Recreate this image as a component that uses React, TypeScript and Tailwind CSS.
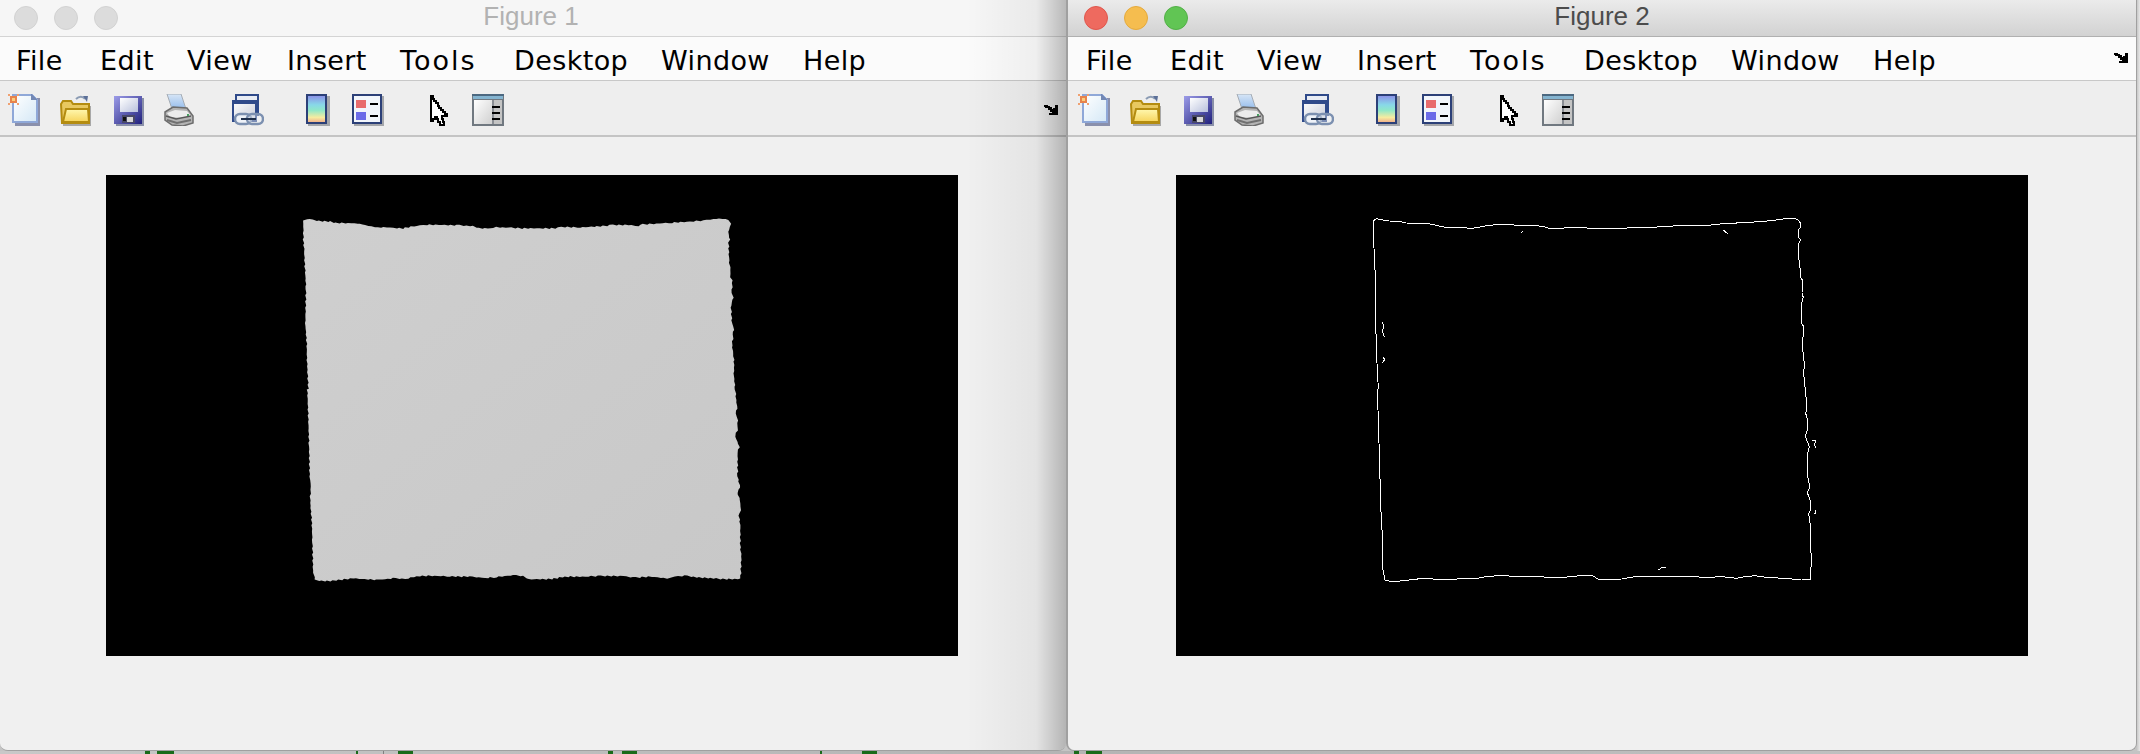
const corners = [
  [70, 62], [80, 56], [100, 60], [118, 63], [152, 65], [168, 69], [232, 70], [255, 75], [285, 82], [320, 82], [350, 84], [368, 85],
  [410, 77], [440, 74], [540, 76], [580, 79], [598, 85], [640, 85], [650, 82], [695, 83], [725, 85], [825, 85], [845, 81], [900, 82],
  [960, 79], [1000, 75], [1045, 75], [1075, 78], [1090, 73], [1130, 71], [1175, 68], [1230, 65], [1270, 61], [1300, 57], [1335, 55],
  [1345, 60], [1352, 70], [1351, 82], [1346, 88], [1346, 112], [1352, 120], [1346, 130], [1347, 180], [1351, 210], [1351, 232],
  [1357, 240], [1356, 280], [1360, 292], [1353, 315], [1356, 372], [1361, 380], [1360, 405], [1356, 435], [1361, 470], [1363, 495],
  [1361, 520], [1366, 570], [1369, 600], [1371, 625], [1367, 640], [1373, 660], [1372, 690], [1366, 710], [1372, 725], [1378, 740],
  [1373, 760], [1373, 830], [1380, 862], [1372, 878], [1380, 900], [1382, 930], [1376, 940], [1381, 975], [1381, 1040], [1384, 1070],
  [1382, 1137], [1355, 1137], [1340, 1138], [1300, 1135], [1250, 1132], [1215, 1127], [1185, 1130], [1160, 1135], [1115, 1130],
  [1060, 1133], [1030, 1128], [955, 1128], [925, 1130], [855, 1130], [815, 1137], [745, 1138], [730, 1128], [700, 1126], [640, 1132],
  [615, 1134], [570, 1130], [500, 1129], [455, 1127], [410, 1129], [375, 1137], [340, 1135], [290, 1140], [220, 1135], [150, 1143],
  [118, 1143], [105, 1140], [99, 1110], [97, 1020], [95, 960], [90, 900], [93, 860], [89, 830], [87, 730], [84, 630], [82, 570],
  [85, 565], [81, 490], [80, 430], [76, 370], [78, 260], [75, 210], [72, 145], [70, 120],
]

const outline = corners.map((p) => p.join(',')).join(' ')

// the torn paper edge: same outline with a small wobble every few pixels
const torn = corners
  .flatMap(([x, y], i) => {
    const [nx, ny] = corners[(i + 1) % corners.length]
    const steps = Math.max(1, Math.round(Math.hypot(nx - x, ny - y) / 9))
    return Array.from({ length: steps }, (_, s) => {
      const t = s / steps
      const wob = Math.sin((x * 3 + y + s * 37) * 2.3) * 1.8
      return `${x + (nx - x) * t + wob},${y + (ny - y) * t + wob}`
    })
  })
  .join(' ')

const specks = [
  '513,98 520,94',
  '1120,90 1133,101',
  '98,365 100,380 98,395 103,412',
  '98,470 104,478 98,488',
  '1386,721 1396,722 1394,735 1399,745',
  '1393,940 1396,940 1395,930',
  '925,1110 935,1103 947,1102',
]

const menus = ['File', 'Edit', 'View', 'Insert', 'Tools', 'Desktop', 'Window', 'Help']

function NewIcon() {
  return (
    <svg width="32" height="32" viewBox="0 0 32 32" shapeRendering="crispEdges">
      <defs>
        <linearGradient id="newFill" x1="0" y1="0" x2="1" y2="1">
          <stop offset="0" stopColor="#ffffff" />
          <stop offset="1" stopColor="#d4e8f6" />
        </linearGradient>
      </defs>
      <rect x="7" y="4" width="25" height="28" fill="#8a90ac" />
      <path d="M5 1h19l5 5v22H5z" fill="url(#newFill)" stroke="#8fa8d8" strokeWidth="2" />
      <path d="M23 0l6 6h-6z" fill="#7488b4" />
      <rect x="2" y="2" width="7" height="7" fill="#e8844c" />
      <rect x="4" y="4" width="3" height="3" fill="#f8d080" />
      <rect x="0" y="0" width="2" height="2" fill="#f0a070" />
      <rect x="9" y="0" width="2" height="2" fill="#f0a070" />
      <rect x="0" y="9" width="2" height="2" fill="#f0a070" />
      <rect x="9" y="9" width="2" height="2" fill="#f0a070" />
    </svg>
  )
}

function OpenIcon() {
  return (
    <svg width="32" height="32" viewBox="0 0 32 32">
      <defs>
        <linearGradient id="folderFill" x1="0" y1="0" x2="0" y2="1">
          <stop offset="0" stopColor="#fff8b0" />
          <stop offset="1" stopColor="#f6d45c" />
        </linearGradient>
      </defs>
      <path d="M17 5c3-3 7-3 9 0" fill="none" stroke="#8c9cb4" strokeWidth="2" />
      <path d="M24 2l5 0-1 6z" fill="#5c7098" />
      <rect x="4" y="12" width="28" height="20" fill="#a8a8a8" />
      <path d="M2 10l2-3h8l2 3h16v19H3z" fill="#e8c860" stroke="#b48c10" strokeWidth="2" />
      <path d="M7 15h22l1 13H4z" fill="url(#folderFill)" stroke="#b48c10" strokeWidth="2" />
    </svg>
  )
}

function SaveIcon() {
  return (
    <svg width="32" height="32" viewBox="0 0 32 32" shapeRendering="crispEdges">
      <defs>
        <linearGradient id="diskFill" x1="0" y1="0" x2="1" y2="1">
          <stop offset="0" stopColor="#9c9ce8" />
          <stop offset="1" stopColor="#20207c" />
        </linearGradient>
        <linearGradient id="labelFill" x1="0" y1="0" x2="1" y2="1">
          <stop offset="0" stopColor="#ffffff" />
          <stop offset="1" stopColor="#b8c0dc" />
        </linearGradient>
      </defs>
      <rect x="4" y="4" width="28" height="28" fill="#8a90a8" />
      <rect x="2" y="2" width="28" height="28" fill="url(#diskFill)" />
      <rect x="8" y="4" width="18" height="14" fill="url(#labelFill)" />
      <rect x="10" y="21" width="13" height="8" fill="#484868" />
      <rect x="11" y="23" width="3" height="4" fill="#111" />
      <rect x="15" y="23" width="6" height="5" fill="#d8d8d8" />
    </svg>
  )
}

function PrintIcon() {
  return (
    <svg width="32" height="32" viewBox="0 0 32 32">
      <defs>
        <linearGradient id="paperFill" x1="0" y1="0" x2="0" y2="1">
          <stop offset="0" stopColor="#d8e6f6" />
          <stop offset="1" stopColor="#94bcec" />
        </linearGradient>
      </defs>
      <path d="M3 0h14l5 15H8z" fill="url(#paperFill)" stroke="#a4acb4" />
      <path d="M1 18l8-5 14 1 6 8v7l-10 3-11-1-7-5z" fill="#b4b4b4" stroke="#6c6c6c" strokeWidth="1.5" />
      <path d="M3 19l8-3 12 1 4 5-9 2-12-1z" fill="#ececec" />
      <path d="M2 22l10 3 15-3" stroke="#585858" strokeWidth="1.5" fill="none" />
      <path d="M3 26l10 3 14-3" stroke="#707070" strokeWidth="2" fill="none" />
      <rect x="23" y="20" width="2" height="2" fill="#48a060" />
    </svg>
  )
}

function LinkIcon() {
  return (
    <svg width="32" height="32" viewBox="0 0 32 32">
      <defs>
        <linearGradient id="linkFill" x1="0" y1="0" x2="1" y2="1">
          <stop offset="0" stopColor="#ffffff" />
          <stop offset="1" stopColor="#c8ccd8" />
        </linearGradient>
      </defs>
      <rect x="4" y="1" width="22" height="20" fill="#e8ecf4" stroke="#2f4a8a" strokeWidth="2" />
      <rect x="1" y="7" width="23" height="20" fill="url(#linkFill)" stroke="#2f4a8a" strokeWidth="2" />
      <rect x="1" y="7" width="23" height="3" fill="#2f4a8a" />
      <rect x="3" y="20" width="16" height="10" rx="5" fill="#eef2f8" stroke="#7c90b0" strokeWidth="2.5" />
      <rect x="15" y="20" width="16" height="10" rx="5" fill="#eef2f8" fillOpacity="0.4" stroke="#7c90b0" strokeWidth="2.5" />
      <rect x="9" y="24" width="15" height="2" fill="#20304c" />
    </svg>
  )
}

function ColorbarIcon() {
  return (
    <svg width="24" height="32" viewBox="0 0 24 32" shapeRendering="crispEdges">
      <defs>
        <linearGradient id="barFill" x1="0" y1="0" x2="0" y2="1">
          <stop offset="0" stopColor="#8c8ce8" />
          <stop offset="0.35" stopColor="#88d8e8" />
          <stop offset="0.55" stopColor="#90e8c8" />
          <stop offset="0.8" stopColor="#f6eca0" />
          <stop offset="1" stopColor="#f0a888" />
        </linearGradient>
      </defs>
      <rect x="2" y="2" width="22" height="30" fill="#a4a6aa" />
      <rect x="1" y="1" width="19" height="28" fill="url(#barFill)" stroke="#2c4078" strokeWidth="2" />
    </svg>
  )
}

function LegendIcon() {
  return (
    <svg width="32" height="32" viewBox="0 0 32 32" shapeRendering="crispEdges">
      <rect x="2" y="2" width="30" height="30" fill="#a4a6aa" />
      <rect x="1" y="1" width="28" height="28" fill="#f2f6fb" stroke="#2c4078" strokeWidth="2" />
      <rect x="4" y="6" width="10" height="8" fill="#e86c6c" />
      <rect x="4" y="18" width="10" height="8" fill="#6c6ce8" />
      <rect x="18" y="9" width="8" height="2" fill="#000" />
      <rect x="18" y="21" width="8" height="2" fill="#000" />
    </svg>
  )
}

function CursorIcon() {
  return (
    <svg width="20" height="32" viewBox="0 0 20 32" shapeRendering="crispEdges">
      <path d="M1 2v25h2v-2h2v-2h2v2h1v3h2v3h4v-3h-1v-3h-1v-3h5v-2h-2v-2h-2v-2h-2v-2h-2v-2H8V9H6V7H4V5H3V2z" fill="#fff" stroke="#000" strokeWidth="1.6" />
    </svg>
  )
}

function PanelIcon() {
  return (
    <svg width="32" height="32" viewBox="0 0 32 32">
      <defs>
        <linearGradient id="panelFill" x1="0" y1="0" x2="1" y2="1">
          <stop offset="0" stopColor="#ffffff" />
          <stop offset="1" stopColor="#d0d0d0" />
        </linearGradient>
      </defs>
      <g shapeRendering="crispEdges">
        <rect x="0" y="0" width="32" height="32" fill="#707880" />
        <rect x="2" y="6" width="18" height="24" fill="url(#panelFill)" />
        <rect x="20" y="6" width="2" height="24" fill="#8a8e94" />
        <rect x="22" y="6" width="8" height="24" fill="#c4c4c4" />
        <rect x="0" y="0" width="32" height="2" fill="#4c6880" />
        <rect x="1" y="2" width="30" height="3" fill="#84b4d0" />
        <rect x="20" y="12" width="8" height="2" fill="#000" />
        <rect x="20" y="18" width="8" height="2" fill="#000" />
        <rect x="20" y="24" width="8" height="2" fill="#000" />
      </g>
    </svg>
  )
}

function DockIcon() {
  return (
    <svg width="14" height="11" viewBox="0 0 14 11" shapeRendering="crispEdges">
      <path d="M0 0h4v1h2v1h2v2h1v-1h2V0h3v10H5V8h3V7H6V5H4V3H1V2H0z" fill="#000" />
    </svg>
  )
}

function Toolbar({ active }: { active?: boolean }) {
  return (
    <div
      className={
        active
          ? 'h-[56px] flex items-start pt-[13px] pl-[10px] pr-[10px] bg-[#eeeeee] border-b-2 border-[#c4c4c4]'
          : 'h-[56px] flex items-start pt-[13px] pl-[8px] pr-[8px] bg-[#eeeeee] border-b-2 border-[#c4c4c4]'
      }
    >
      <NewIcon />
      <div className="ml-[19px]"><OpenIcon /></div>
      <div className="ml-[21px]"><SaveIcon /></div>
      <div className="ml-[20px]"><PrintIcon /></div>
      <div className="ml-[36px]"><LinkIcon /></div>
      <div className="ml-[42px]"><ColorbarIcon /></div>
      <div className="ml-[22px]"><LegendIcon /></div>
      <div className="ml-[46px]"><CursorIcon /></div>
      <div className="ml-[22px]"><PanelIcon /></div>
      {!active && <div className="ml-auto h-[32px] flex items-center"><DockIcon /></div>}
    </div>
  )
}

function Picture({ edges }: { edges?: boolean }) {
  return (
    <svg width="852" height="481" viewBox="-522 -75 2556 1443" className="bg-black block">
      <defs>
        <linearGradient id="sheet" x1="0" y1="0" x2="1" y2="1">
          <stop offset="0" stopColor="#cfcfcf" />
          <stop offset="1" stopColor="#c8c8c8" />
        </linearGradient>
      </defs>
      {edges ? (
        <g fill="none" stroke="#ffffff" strokeWidth="3" shapeRendering="crispEdges">
          <polygon points={outline} />
          {specks.map((s) => (
            <polyline key={s} points={s} />
          ))}
        </g>
      ) : (
        <polygon points={torn} fill="url(#sheet)" />
      )}
    </svg>
  )
}

function FigureWindow({ title, active }: { title: string; active?: boolean }) {
  return (
    <div className="h-full flex flex-col bg-[#f0f0f0]">
      <div
        className={
          active
            ? 'h-[37px] flex items-center relative pl-[16px] gap-[16px] bg-gradient-to-b from-[#ebebeb] to-[#d2d2d2] border-b border-[#b0b0b0]'
            : 'h-[37px] flex items-center relative pl-[14px] gap-[16px] bg-[#f6f6f6] border-b border-[#d4d4d4]'
        }
      >
        {active ? (
          <>
            <span className="w-[24px] h-[24px] rounded-full bg-[#ee6a5f] border border-[#e0564c]" />
            <span className="w-[24px] h-[24px] rounded-full bg-[#f5bd4f] border border-[#e5aa3c]" />
            <span className="w-[24px] h-[24px] rounded-full bg-[#61c554] border border-[#52b047]" />
          </>
        ) : (
          <>
            <span className="w-[24px] h-[24px] rounded-full bg-[#dcdcdc] border border-[#d2d2d2]" />
            <span className="w-[24px] h-[24px] rounded-full bg-[#dcdcdc] border border-[#d2d2d2]" />
            <span className="w-[24px] h-[24px] rounded-full bg-[#dcdcdc] border border-[#d2d2d2]" />
          </>
        )}
        <div
          className={
            active
              ? 'absolute inset-0 pb-[3px] flex items-center justify-center text-[26px] text-[#4c4c4c]'
              : 'absolute inset-0 pb-[3px] pr-[4px] flex items-center justify-center text-[26px] text-[#b2b2b2]'
          }
        >
          {title}
        </div>
      </div>
      <div
        className={
          active
            ? "h-[44px] grid grid-cols-[84px_87px_100px_113px_114px_147px_142px_82px_1fr] items-center pl-[18px] bg-[#fbfbfb] border-b border-[#c8c8c8] text-[27px] tracking-[0.4px] text-black font-['DejaVu_Sans',sans-serif]"
            : "h-[44px] grid grid-cols-[84px_87px_100px_113px_114px_147px_142px_82px_1fr] items-center pl-[16px] bg-[#fbfbfb] border-b border-[#c8c8c8] text-[27px] tracking-[0.4px] text-black font-['DejaVu_Sans',sans-serif]"
        }
      >
        {menus.map((m) => (
          <span key={m} className={m === 'Tools' ? 'pt-[4px] tracking-[2px]' : 'pt-[4px]'}>
            {m}
          </span>
        ))}
        <div className="self-stretch -mb-px flex items-center justify-end pr-[8px] border-b-2 border-[#c0c0c0]">
          {active && <DockIcon />}
        </div>
      </div>
      <Toolbar active={active} />
      <div className={active ? 'flex-1 pt-[38px] pl-[108px]' : 'flex-1 pt-[38px] pl-[106px]'}>
        <Picture edges={active} />
      </div>
    </div>
  )
}

function DesktopStrip() {
  return (
    <div className="h-[3px] flex items-start bg-gradient-to-r from-[#c8c8c8] via-[#b4b4b4] to-[#c4c4c4]">
      <span className="ml-[145px] w-[5px] h-[3px] bg-[#1a6b1a]" />
      <span className="ml-[7px] w-[17px] h-[3px] bg-[#1a6b1a]" />
      <span className="ml-[182px] w-[2px] h-[3px] bg-[#1a6b1a]" />
      <span className="ml-[25px] w-px h-[3px] bg-[#808080]" />
      <span className="ml-[14px] w-[15px] h-[3px] bg-[#1a6b1a]" />
      <span className="ml-[195px] w-[5px] h-[3px] bg-[#1a6b1a]" />
      <span className="ml-[9px] w-[15px] h-[3px] bg-[#1a6b1a]" />
      <span className="ml-[183px] w-[2px] h-[3px] bg-[#1a6b1a]" />
      <span className="ml-[40px] w-[15px] h-[3px] bg-[#1a6b1a]" />
      <span className="ml-[197px] w-[5px] h-[3px] bg-[#1a6b1a]" />
      <span className="ml-[7px] w-[16px] h-[3px] bg-[#1a6b1a]" />
    </div>
  )
}

export default function App() {
  return (
    <div className="w-[2140px] h-[754px] overflow-hidden flex flex-col bg-[#c4c4c4] font-['Liberation_Sans',sans-serif]">
      <div className="h-[751px] flex">
        <div className="w-[1066px] relative rounded-b-[8px] overflow-hidden border-b border-[#a0a0a0]">
          <FigureWindow title="Figure 1" />
          <div className="absolute top-0 bottom-0 right-0 w-[100px] bg-gradient-to-r from-transparent via-black/5 via-70% to-black/25" />
        </div>
        <div className="w-[1071px] border-l-2 border-r border-b border-[#a0a0a0] rounded-b-[8px] overflow-hidden">
          <FigureWindow title="Figure 2" active />
        </div>
        <div className="flex-1 bg-gradient-to-r from-[#c8c8c8] to-[#e8e8e8]" />
      </div>
      <DesktopStrip />
    </div>
  )
}
